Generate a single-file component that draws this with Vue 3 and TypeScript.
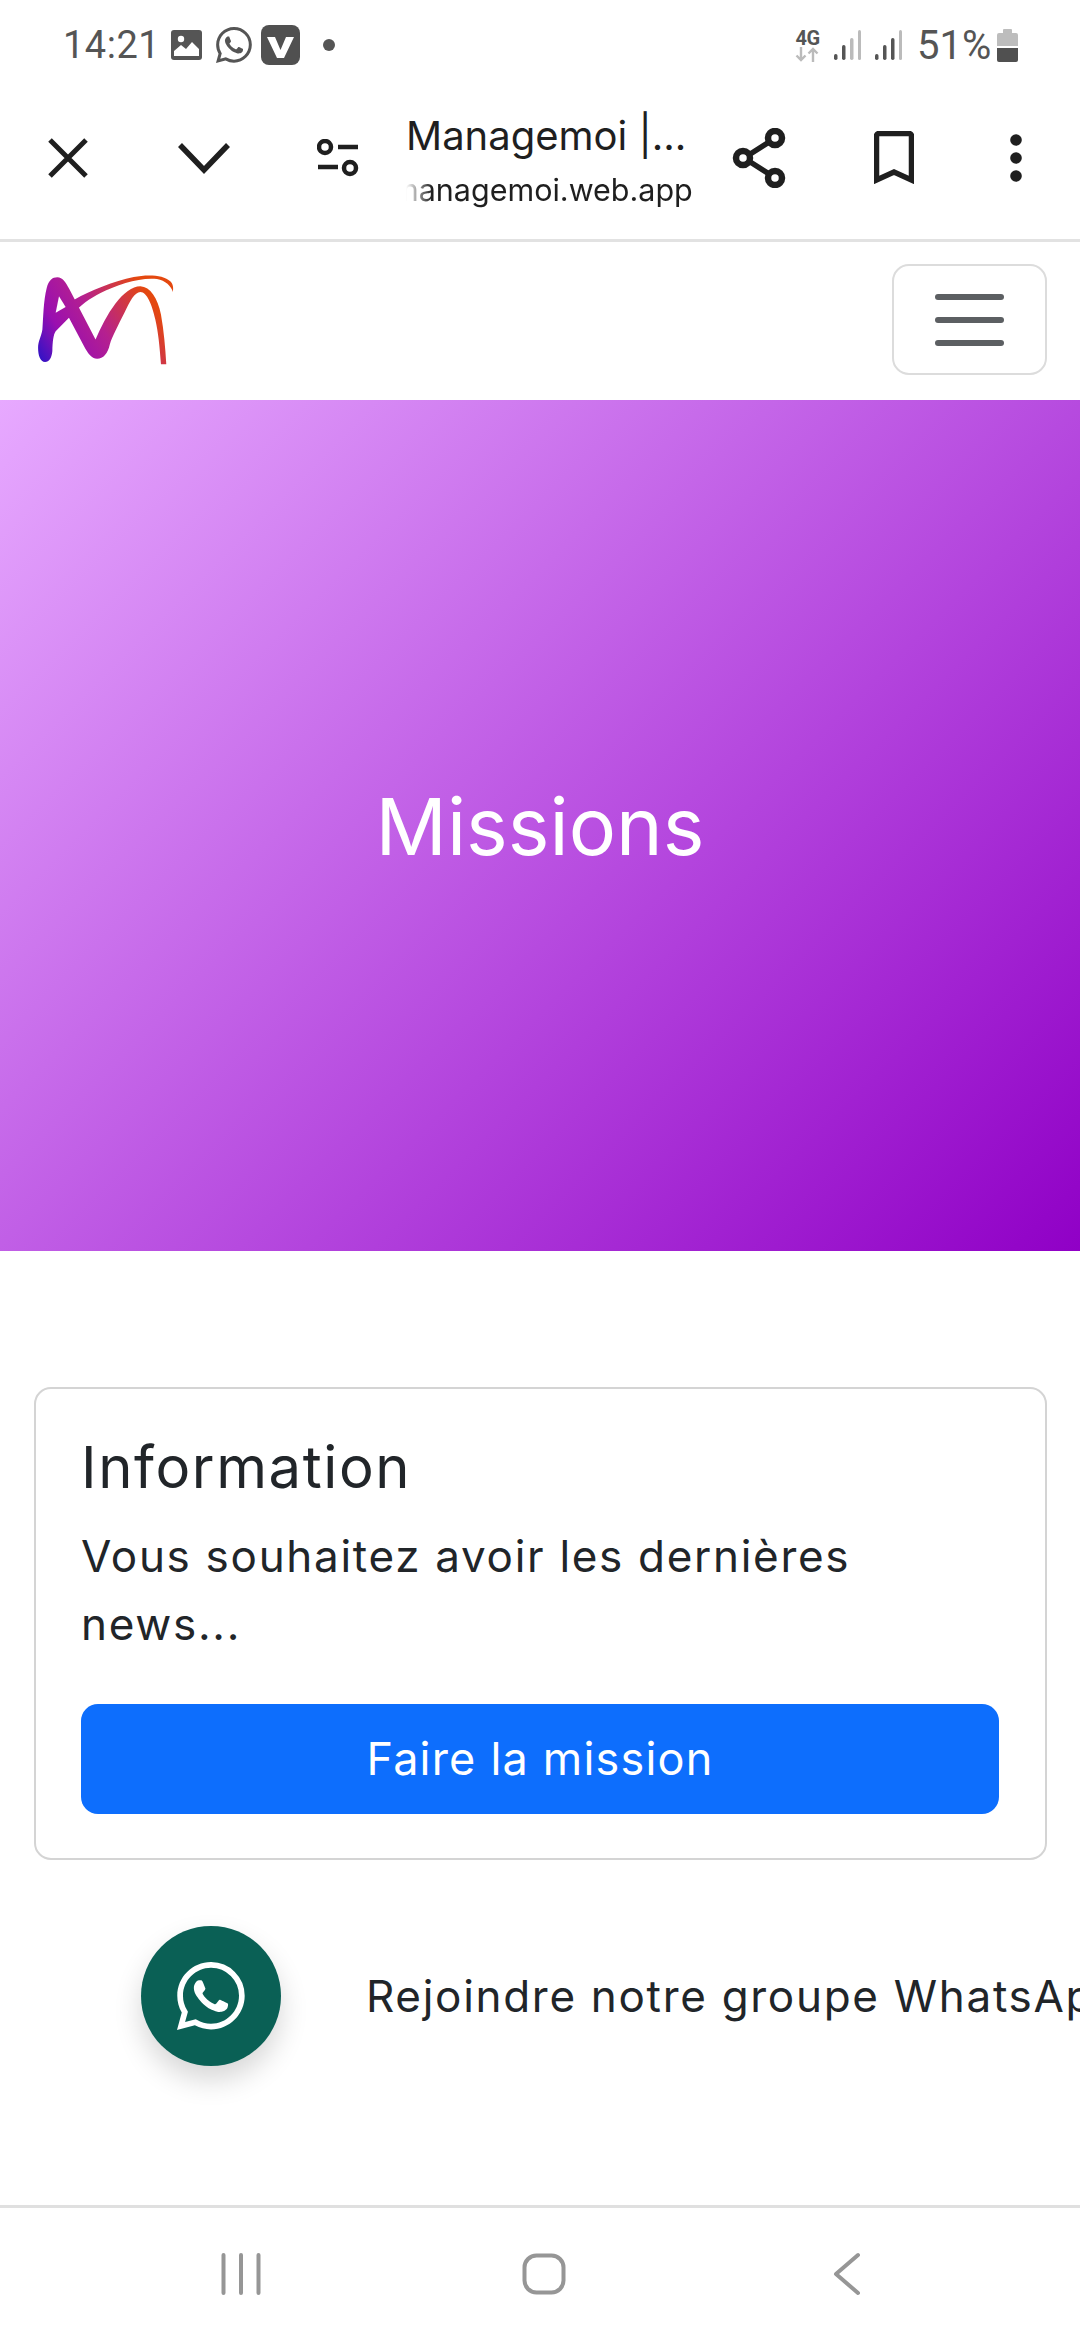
<script setup lang="ts">
// Chrome custom tab showing the Managemoi missions page
const whatsapp =
  'M13.601 2.326A7.854 7.854 0 0 0 7.994 0C3.627 0 .068 3.558.064 7.926c0 1.399.366 2.76 1.057 3.965L0 16l4.204-1.102a7.933 7.933 0 0 0 3.79.965h.004c4.368 0 7.926-3.558 7.93-7.93A7.898 7.898 0 0 0 13.6 2.326zM7.994 14.521a6.573 6.573 0 0 1-3.356-.92l-.24-.144-2.494.654.666-2.433-.156-.251a6.56 6.56 0 0 1-1.007-3.505c0-3.626 2.957-6.584 6.591-6.584a6.56 6.56 0 0 1 4.66 1.931 6.557 6.557 0 0 1 1.928 4.66c-.004 3.639-2.961 6.592-6.592 6.592zm3.615-4.934c-.197-.099-1.17-.578-1.353-.646-.182-.065-.315-.099-.445.099-.133.197-.513.646-.627.775-.114.133-.232.148-.43.05-.197-.1-.836-.308-1.592-.985-.59-.525-.985-1.175-1.103-1.372-.114-.198-.011-.304.088-.403.087-.088.197-.232.296-.346.1-.114.133-.198.198-.33.065-.134.034-.248-.015-.347-.05-.099-.445-1.076-.612-1.47-.16-.389-.323-.335-.445-.34-.114-.007-.247-.007-.38-.007a.729.729 0 0 0-.529.247c-.182.198-.691.677-.691 1.654 0 .977.71 1.916.81 2.049.098.133 1.394 2.132 3.383 2.992.47.205.84.326 1.129.418.475.152.904.129 1.246.08.38-.058 1.171-.48 1.338-.943.164-.464.164-.86.114-.943-.049-.084-.182-.133-.38-.232z'
</script>

<template>
  <div class="phone">
    <div class="status">
      <span class="time">14:21</span>
      <svg class="s-img" viewBox="0 0 31 32">
        <path d="M3 1h25a3 3 0 0 1 3 3v24a3 3 0 0 1-3 3H3a3 3 0 0 1-3-3V4a3 3 0 0 1 3-3z" fill="#555" />
        <circle cx="10" cy="10" r="3.2" fill="#fff" />
        <path d="M3 27v-5l7-6 5 4 6-7 7 7v7z" fill="#fff" />
      </svg>
      <svg class="s-wa" viewBox="0 0 16 16"><path :d="whatsapp" fill="#555" /></svg>
      <svg class="s-v" viewBox="0 0 39 40">
        <rect width="39" height="40" rx="8" fill="#505050" />
        <path d="M6 12h8l5.500 13L25 12h8l-10 21h-7z" fill="#fff" />
      </svg>
      <span class="s-dot"></span>
      <span class="grow"></span>
      <div class="net">
        <span class="net-g">4G</span>
        <svg class="net-a" viewBox="0 0 25 15">
          <path d="M6 0v13M1.500 8.500 6 13l4.500-4.500M18 15V2M13.500 6.500 18 2l4.500 4.500" fill="none" stroke="#bbb" stroke-width="2.400" />
        </svg>
      </div>
      <svg class="s-sig" viewBox="0 0 27 30">
        <rect x="0" y="24" width="3.500" height="6" rx="1.700" fill="#555" />
        <rect x="8" y="15" width="3.500" height="15" rx="1.700" fill="#555" />
        <rect x="16" y="8" width="3.500" height="22" rx="1.700" fill="#bbb" />
        <rect x="24" y="0" width="3" height="30" rx="1.500" fill="#bbb" />
      </svg>
      <svg class="s-sig s-sig2" viewBox="0 0 27 30">
        <rect x="0" y="24" width="3.500" height="6" rx="1.700" fill="#555" />
        <rect x="8" y="15" width="3.500" height="15" rx="1.700" fill="#555" />
        <rect x="16" y="8" width="3.500" height="22" rx="1.700" fill="#555" />
        <rect x="24" y="0" width="3" height="30" rx="1.500" fill="#bbb" />
      </svg>
      <span class="pct">51%</span>
      <svg class="s-bat" viewBox="0 0 21 33">
        <path d="M7 0h7a1 1 0 0 1 1 1v3h4a2 2 0 0 1 2 2v11H0V6a2 2 0 0 1 2-2h4V1a1 1 0 0 1 1-1z" fill="#bdbdbd" />
        <path d="M0 19h21v12a2 2 0 0 1-2 2H2a2 2 0 0 1-2-2z" fill="#505050" />
      </svg>
    </div>

    <div class="toolbar">
      <div class="tb-btn b-close">
        <svg width="40" height="40" viewBox="0 0 40 40">
          <path d="M2 2l36 36M38 2 2 38" stroke="#1f1f1f" stroke-width="5" fill="none" />
        </svg>
      </div>
      <div class="tb-btn b-down">
        <svg width="52" height="32" viewBox="0 0 52 32">
          <path d="M2 3l24 25L50 3" stroke="#1f1f1f" stroke-width="5.500" fill="none" />
        </svg>
      </div>
      <div class="tb-btn b-tune">
        <svg width="42" height="38" viewBox="0 0 42 38">
          <circle cx="8" cy="8" r="6" stroke="#1f1f1f" stroke-width="4.500" fill="none" />
          <path d="M21 8h20M1 28h20" stroke="#1f1f1f" stroke-width="4.500" fill="none" />
          <circle cx="33" cy="29" r="6" stroke="#1f1f1f" stroke-width="4.500" fill="none" />
        </svg>
      </div>
      <div class="tb-title">
        <div class="t-main">Managemoi |...</div>
        <div class="t-url"><span>managemoi.web.app</span></div>
      </div>
      <div class="tb-btn b-share">
        <svg width="54" height="60" viewBox="0 0 54 60">
          <path d="M12 30 42 11M12 30l30 19" stroke="#1f1f1f" stroke-width="5.500" fill="none" />
          <circle cx="11" cy="30" r="7" stroke="#1f1f1f" stroke-width="6.500" fill="#fff" />
          <circle cx="43" cy="10" r="7" stroke="#1f1f1f" stroke-width="6.500" fill="#fff" />
          <circle cx="43" cy="50" r="7" stroke="#1f1f1f" stroke-width="6.500" fill="#fff" />
        </svg>
      </div>
      <div class="tb-btn b-mark">
        <svg width="40" height="53" viewBox="0 0 40 53">
          <path d="M2.500 49V5a2.500 2.500 0 0 1 2.500-2.500h30A2.500 2.500 0 0 1 37.500 5v44L20 41z" stroke="#1f1f1f" stroke-width="5.500" fill="none" />
        </svg>
      </div>
      <div class="tb-btn b-more">
        <svg width="12" height="48" viewBox="0 0 12 48">
          <circle cx="6" cy="6" r="5.800" fill="#1f1f1f" />
          <circle cx="6" cy="24" r="5.800" fill="#1f1f1f" />
          <circle cx="6" cy="42" r="5.800" fill="#1f1f1f" />
        </svg>
      </div>
    </div>

    <div class="content">
      <nav class="navbar">
        <svg class="logo" viewBox="100 130 430 280">
          <defs>
            <linearGradient id="lg" gradientUnits="userSpaceOnUse" x1="120" y1="390" x2="440" y2="190">
              <stop offset="0" stop-color="#3512c4" />
              <stop offset="0.25" stop-color="#9a0fb0" />
              <stop offset="0.55" stop-color="#b5208f" />
              <stop offset="1" stop-color="#e4480f" />
            </linearGradient>
          </defs>
          <path
            fill="url(#lg)"
            d="M112 355C112 335 122 320 125 300C128 260 128 215 138 175C144 152 155 143 170 143C186 143 196 160 206 178L285 330C300 295 320 255 345 222C370 190 395 170 420 170C450 172 472 205 482 255C491 305 495 355 498 405H482C478 350 474 310 465 270C455 225 440 187 420 187C403 187 388 215 372 250C352 290 336 320 328 345C322 372 308 388 290 388C272 388 262 372 250 350L205 265L165 305C158 315 156 335 155 365C153 385 146 398 133 398C119 398 112 378 112 355Z"
          />
          <path
            fill="url(#lg)"
            d="M165 250L222 210C270 182 340 155 400 142C440 134 490 135 510 155C518 163 520 172 518 187C513 170 495 152 470 148C420 142 350 165 300 190C270 205 240 225 205 265Z"
          />
          <path fill="#fff" d="M175 200L165 250L195 232Z" />
        </svg>
        <div class="toggler">
          <span></span>
          <span></span>
          <span></span>
        </div>
      </nav>

      <section class="hero">
        <h1>Missions</h1>
      </section>

      <main class="body">
        <div class="card">
          <h5>Information</h5>
          <p>Vous souhaitez avoir les dernières news...</p>
          <a class="btn">Faire la mission</a>
        </div>

        <div class="wa-row">
          <div class="wa-circle">
            <svg width="68" height="68" viewBox="0 0 16 16"><path :d="whatsapp" fill="#fff" /></svg>
          </div>
          <span class="wa-text">Rejoindre notre groupe WhatsApp</span>
        </div>
      </main>
    </div>

    <div class="sysnav">
      <svg class="n-recent" width="40" height="42" viewBox="0 0 40 42">
        <path d="M2.500 2v38M20 2v38M37.500 2v38" stroke="#969696" stroke-width="4" stroke-linecap="round" fill="none" />
      </svg>
      <svg class="n-home" width="44" height="42" viewBox="0 0 44 42">
        <rect x="2.500" y="2.500" width="39" height="37" rx="12" stroke="#969696" stroke-width="4" fill="none" />
      </svg>
      <svg class="n-back" width="28" height="44" viewBox="0 0 28 44">
        <path d="M25 3 3 22l22 19" stroke="#969696" stroke-width="4" stroke-linecap="round" stroke-linejoin="round" fill="none" />
      </svg>
    </div>
  </div>
</template>

<style>
html,
body {
  margin: 0;
  background: #fff;
}
</style>

<style scoped>
.phone {
  width: 1080px;
  height: 2340px;
  display: flex;
  flex-direction: column;
  overflow: hidden;
  background: #fff;
  font-family: Inter, "Noto Sans", sans-serif;
}

.status {
  height: 72px;
  box-sizing: border-box;
  padding: 18px 62px 0 63px;
  flex: none;
  display: flex;
  align-items: center;
  color: #555;
  font-family: Roboto, sans-serif;
}
.grow { flex: 1; }
.time { font-size: 38px; width: 108px; letter-spacing: 0.5px; }
.s-img { width: 31px; height: 32px; }
.s-wa { width: 36px; height: 36px; margin-left: 14px; }
.s-v { width: 39px; height: 40px; margin-left: 9px; }
.s-dot {
  width: 12px;
  height: 12px;
  border-radius: 50%;
  background: #555;
  margin-left: 23px;
}
.net {
  width: 25px;
  display: flex;
  flex-direction: column;
  align-items: center;
}
.net-g { font-size: 20px; font-weight: 700; line-height: 18px; letter-spacing: -0.5px; }
.net-a { width: 25px; height: 15px; }
.s-sig { width: 27px; height: 30px; margin-left: 14px; }
.s-sig2 { margin-left: 14px; }
.pct { font-size: 40px; margin-left: 15px; width: 73px; }
.s-bat { width: 21px; height: 33px; margin-left: 7px; }

.toolbar {
  height: 167px;
  flex: none;
  position: relative;
  display: flex;
  align-items: center;
  border-bottom: 3px solid #e2e2e2;
  box-sizing: content-box;
}
.tb-btn {
  display: flex;
  align-items: center;
  justify-content: center;
  flex: none;
  margin-top: 4px;
}
.b-close { width: 40px; margin-left: 48px; }
.b-down { width: 52px; margin-left: 90px; }
.b-tune { width: 42px; margin-left: 87px; }
.tb-title { width: 324px; margin-left: 47px; margin-top: 8px; flex: none; color: #1f1f1f; }
.t-main { font-size: 40px; line-height: 54px; white-space: nowrap; }
.t-url {
  font-size: 30.500px;
  line-height: 42px;
  width: 290px;
  overflow: hidden;
  white-space: nowrap;
  margin-top: 6px;
  -webkit-mask-image: linear-gradient(90deg, transparent 0, #000 26px);
  mask-image: linear-gradient(90deg, transparent 0, #000 26px);
}
.t-url span { display: inline-block; margin-left: -14px; }
.b-share { width: 54px; margin-left: 2px; }
.b-mark { width: 40px; margin-left: 88px; }
.b-more { width: 12px; margin-left: 96px; }

.content {
  flex: 1;
  min-height: 0;
  overflow: hidden;
}
.navbar {
  height: 158px;
  display: flex;
  align-items: flex-start;
  justify-content: space-between;
  padding: 0 33px 0 34px;
}
.logo {
  width: 143px;
  height: 93px;
  margin-top: 31px;
}
.toggler {
  width: 155px;
  height: 111px;
  box-sizing: border-box;
  margin-top: 22px;
  border: 2px solid #dcdcdc;
  border-radius: 17px;
  display: flex;
  flex-direction: column;
  align-items: center;
  justify-content: center;
  gap: 17px;
}
.toggler span {
  width: 69px;
  height: 6px;
  border-radius: 3px;
  background: #5c5f62;
}

.hero {
  height: 851px;
  display: flex;
  align-items: center;
  justify-content: center;
  background: linear-gradient(135deg, #e7a9ff 0%, #9000c6 100%);
}
.hero h1 {
  margin: 0;
  color: #fff;
  font-size: 79px;
  font-weight: 400;
}

.body {
  padding: 136px 33px 0 34px;
}
.card {
  border: 2px solid #d4d4d4;
  border-radius: 17px;
  padding: 45px 46px 44px 45px;
  color: #212529;
}
.card h5 {
  margin: 0 0 22px;
  font-size: 58px;
  font-weight: 400;
  line-height: 67px;
  letter-spacing: 1.600px;
}
.card p {
  margin: 0 0 46px;
  font-size: 44px;
  line-height: 67.500px;
  letter-spacing: 1.700px;
}
.btn {
  display: block;
  height: 110px;
  line-height: 110px;
  text-align: center;
  border-radius: 17px;
  background: #0d6efd;
  color: #fff;
  font-size: 45px;
  letter-spacing: 1.200px;
}
.wa-row {
  display: flex;
  align-items: center;
  margin-top: 66px;
  padding-left: 107px;
  gap: 85px;
  white-space: nowrap;
}
.wa-circle {
  width: 140px;
  height: 140px;
  flex: none;
  border-radius: 50%;
  background: #0a6055;
  display: flex;
  align-items: center;
  justify-content: center;
  box-shadow: 0 14px 28px rgba(0, 0, 0, 0.16);
}
.wa-text {
  font-size: 44px;
  letter-spacing: 1.700px;
  color: #212529;
}

.sysnav {
  height: 132px;
  flex: none;
  position: relative;
  border-top: 3px solid #e0e0e0;
  display: flex;
  align-items: center;
}
.n-recent { margin-left: 221px; }
.n-home { margin-left: 261px; }
.n-back { margin-left: 267px; }
</style>
